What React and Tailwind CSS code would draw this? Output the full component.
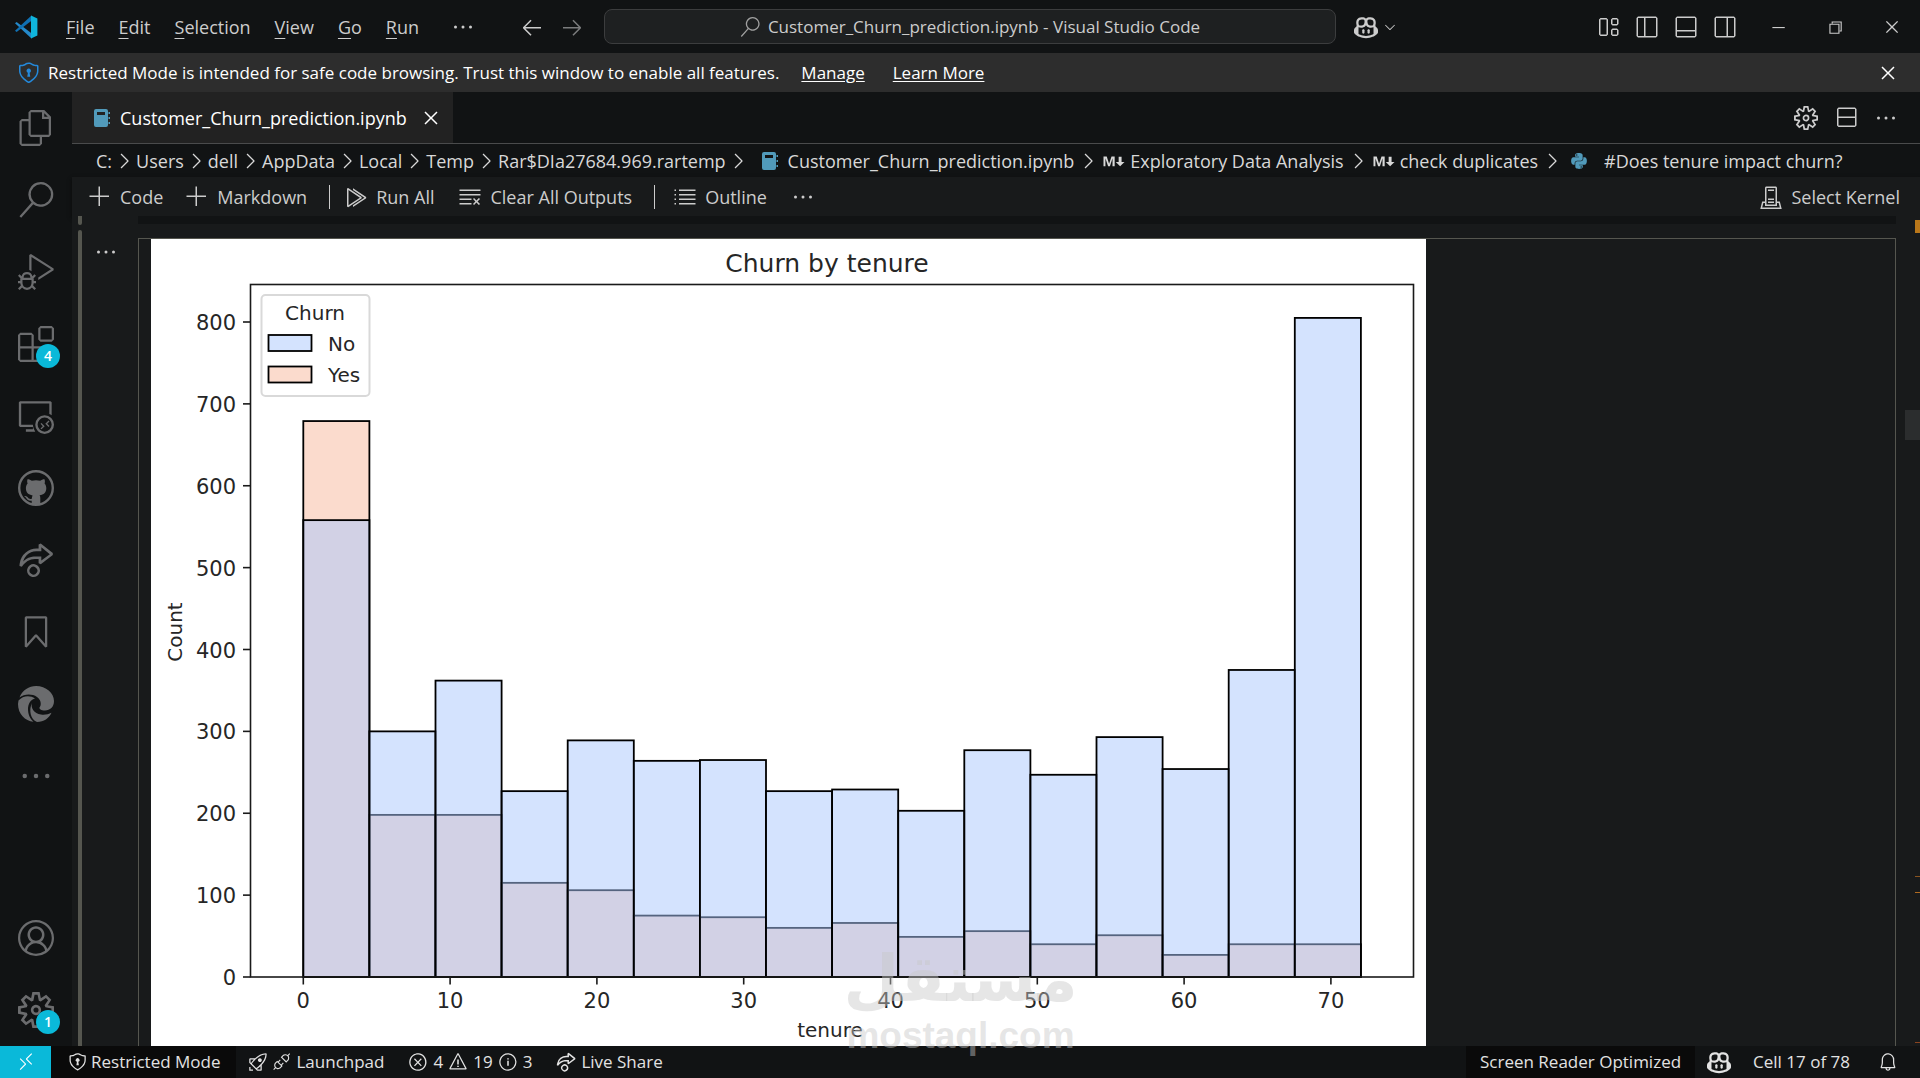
import {
  VscFiles, VscSearch, VscDebugAlt, VscExtensions, VscRemoteExplorer, VscLiveShare, VscBookmark,
  VscEllipsis, VscAccount, VscSettingsGear, VscArrowLeft, VscArrowRight, VscCopilot, VscChevronDown,
  VscChevronRight, VscLayout, VscLayoutSidebarLeftOff, VscLayoutPanelOff, VscLayoutSidebarRightOff,
  VscChromeMinimize, VscChromeRestore, VscChromeClose, VscClose, VscShield, VscSplitVertical,
  VscMarkdown, VscAdd, VscRunAll, VscClearAll, VscListUnordered, VscServerEnvironment, VscRemote,
  VscRocket, VscDebugDisconnect, VscError, VscWarning, VscInfo, VscBell,
} from 'react-icons/vsc'
import { FaPython } from 'react-icons/fa'

const MENU = ['File', 'Edit', 'Selection', 'View', 'Go', 'Run']
const FOLDERS = ['C:', 'Users', 'dell', 'AppData', 'Local', 'Temp', 'Rar$DIa27684.969.rartemp']

// histogram counts per 4.5 month bin
const NO = [558, 300, 362, 227, 289, 264, 265, 227, 229, 203, 277, 247, 293, 254, 375, 805]
const YES = [679, 198, 198, 115, 106, 75, 73, 60, 66, 49, 56, 40, 51, 27, 40, 40]

function VsCodeLogo() {
  return (
    <svg className="size-6" viewBox="0 0 24 24" aria-hidden="true">
      <path d="M1 8.2 2.6 6.9 17.5 18.2V23.6z" fill="#2489ca" />
      <path d="M1 15.8 2.6 17.1 17.5 5.8V.4z" fill="#1070b3" />
      <path d="M17 .4 23.4 3.4V20.6L17 23.6z" fill="#0fb5dc" />
    </svg>
  )
}

function NotebookIcon() {
  return (
    <svg className="h-[18px] w-4 shrink-0" viewBox="0 0 16 18" aria-hidden="true">
      <path fill="#519aba" fillRule="evenodd" d="M2 0h10a2 2 0 0 1 2 2v14a2 2 0 0 1-2 2H2a2 2 0 0 1-2-2V2a2 2 0 0 1 2-2zm1 3v3h8V3z" />
      <path fill="#519aba" d="M14.500 3H16v2h-1.500zM14.500 8H16v2h-1.500zM14.500 13H16v2h-1.500z" />
    </svg>
  )
}

function GithubIcon() {
  return (
    <svg className="size-9" viewBox="0 0 36 36" fill="currentColor" aria-hidden="true">
      <circle cx="18" cy="18" r="16.8" fill="none" stroke="currentColor" strokeWidth="2.4" />
      <path d="M9.5 9.2c1.700 0 3.200.7 4.300 1.500a17 17 0 0 1 8.400 0c1.100-.8 2.600-1.500 4.300-1.500.6 1.700.5 3.200.1 4.200 1.200 1.400 1.700 2.900 1.700 4.900 0 4.400-2.600 6.300-6.700 7 .5.8.7 1.700.7 2.800V35h-8.600v-4.300c-3.400.5-4.600-1-5.500-2.600-.5-.9-1.100-1.500-2-1.900 1.700-.5 2.900.4 3.700 1.400 1 1.400 2 1.700 3.900 1.200.1-1.400.3-2.500.8-3.400-4.200-.7-6.700-2.700-6.700-7.100 0-2 .5-3.500 1.700-4.900-.5-1-.6-2.500-.1-4.200z" />
    </svg>
  )
}

function EdgeIcon() {
  return (
    <svg className="size-9" viewBox="0 0 36 36" fill="currentColor" aria-hidden="true">
      <path d="M1.500 11.500C4.500 4 11 0 18 0c10 0 18 7 18 15 0 6-4 9.500-9 9.500-4 0-6-1.500-5.500-3 2-2 2-7.500-2.500-10.500C14 7.500 6 8 1.500 11.500z" />
      <path d="M.5 14.500C5 9.500 12 9 17 12.500c-4 .5-7 5.500-7 10.500s2 10 5.500 12.700C7 35 0 28 0 18z" />
      <path d="M14 17c-1.500 5 2 10.500 9 11.500 4 .6 7.500-.4 10.500-1.800C31 32 26 36 19 36 12.500 33.500 10.500 24 14 17z" />
    </svg>
  )
}

function TitleBar() {
  return (
    <header className="flex h-[53px] shrink-0 items-center text-[#cccccc]">
      <div className="flex flex-1 items-center">
        <div className="ml-[14px] mr-4">
          <VsCodeLogo />
        </div>
        {MENU.map((item) => (
          <button key={item} type="button" className="px-3">
            <span className="underline decoration-1 underline-offset-4">{item[0]}</span>
            {item.slice(1)}
          </button>
        ))}
        <button type="button" aria-label="More menus" className="px-5"><VscEllipsis className="size-6" /></button>
        <div className="ml-auto flex gap-4">
          <button type="button" aria-label="Go back"><VscArrowLeft className="size-6" /></button>
          <button type="button" aria-label="Go forward" className="text-[#7b7c7d]"><VscArrowRight className="size-6" /></button>
        </div>
      </div>
      <button type="button" className="ml-5 flex h-[35px] w-[732px] items-center justify-center gap-2 rounded-lg border border-[#3c3d3e] bg-[#1e2021] text-[17px]">
        <VscSearch className="size-5 text-[#a0a0a0]" />
        Customer_Churn_prediction.ipynb - Visual Studio Code
      </button>
      <div className="flex flex-1 items-center">
        <button type="button" aria-label="Copilot" className="ml-[18px] flex items-center gap-1">
          <VscCopilot className="size-6" />
          <VscChevronDown className="size-4" />
        </button>
        <div className="ml-auto flex items-center gap-[15px]">
          <button type="button" aria-label="Customize layout"><VscLayout className="size-6" /></button>
          <button type="button" aria-label="Toggle side bar"><VscLayoutSidebarLeftOff className="size-6" /></button>
          <button type="button" aria-label="Toggle panel"><VscLayoutPanelOff className="size-6" /></button>
          <button type="button" aria-label="Toggle secondary side bar"><VscLayoutSidebarRightOff className="size-6" /></button>
        </div>
        <div className="ml-3 flex items-center">
          <button type="button" aria-label="Minimize" className="flex w-[57px] justify-center"><VscChromeMinimize className="size-[18px]" /></button>
          <button type="button" aria-label="Restore" className="flex w-[57px] justify-center"><VscChromeRestore className="size-[18px]" /></button>
          <button type="button" aria-label="Close" className="flex w-[57px] justify-center"><VscChromeClose className="size-[18px]" /></button>
        </div>
      </div>
    </header>
  )
}

function Banner() {
  return (
    <div className="flex h-[39px] shrink-0 items-center bg-[#2d2d2d] pl-4 pr-5 text-[17px] text-white">
      <VscShield className="mr-2 size-6 text-[#2489db]" />
      <span>Restricted Mode is intended for safe code browsing. Trust this window to enable all features.</span>
      <a href="#manage" className="ml-[22px] underline underline-offset-2">Manage</a>
      <a href="#learn" className="ml-7 underline underline-offset-2">Learn More</a>
      <button type="button" aria-label="Dismiss" className="ml-auto"><VscClose className="size-6" /></button>
    </div>
  )
}

function Badge({ children }) {
  return (
    <span className="absolute left-9 top-9 flex size-6 items-center justify-center rounded-full bg-[#0ab9d9] text-sm font-semibold text-white">
      {children}
    </span>
  )
}

function ActivityItem({ label, badge, children }) {
  return (
    <button type="button" aria-label={label} className="relative flex size-[72px] items-center justify-center">
      {children}
      {badge && <Badge>{badge}</Badge>}
    </button>
  )
}

function ActivityBar() {
  return (
    <nav className="flex w-[72px] shrink-0 flex-col text-[#6b6c6e]">
      <ActivityItem label="Explorer"><VscFiles className="size-9" /></ActivityItem>
      <ActivityItem label="Search"><VscSearch className="size-9" /></ActivityItem>
      <ActivityItem label="Run and Debug"><VscDebugAlt className="size-9" /></ActivityItem>
      <ActivityItem label="Extensions" badge="4"><VscExtensions className="size-9" /></ActivityItem>
      <ActivityItem label="Remote Explorer"><VscRemoteExplorer className="size-9" /></ActivityItem>
      <ActivityItem label="GitHub"><GithubIcon /></ActivityItem>
      <ActivityItem label="Live Share"><VscLiveShare className="size-9" /></ActivityItem>
      <ActivityItem label="Bookmarks"><VscBookmark className="size-9" /></ActivityItem>
      <ActivityItem label="Edge Tools"><EdgeIcon /></ActivityItem>
      <ActivityItem label="Additional views"><VscEllipsis className="size-9" /></ActivityItem>
      <div className="mt-auto">
        <ActivityItem label="Accounts"><VscAccount className="size-9" /></ActivityItem>
        <ActivityItem label="Manage" badge="1"><VscSettingsGear className="size-9" /></ActivityItem>
      </div>
    </nav>
  )
}

function Tabs() {
  return (
    <div className="flex h-[52px] shrink-0 items-center border-b border-[#4a4b4c]">
      <div className="flex h-full items-center bg-[#222222] pl-[22px] pr-[10px] text-white">
        <NotebookIcon />
        <span className="ml-[10px] mr-3">Customer_Churn_prediction.ipynb</span>
        <button type="button" aria-label="Close tab"><VscClose className="size-6" /></button>
      </div>
      <div className="ml-auto mr-[22px] flex gap-4 text-[#cccccc]">
        <button type="button" aria-label="Notebook settings"><VscSettingsGear className="size-6" /></button>
        <button type="button" aria-label="Split editor"><VscSplitVertical className="size-6" /></button>
        <button type="button" aria-label="More actions"><VscEllipsis className="size-6" /></button>
      </div>
    </div>
  )
}

function Sep() {
  return <VscChevronRight className="size-6 shrink-0" />
}

function Breadcrumbs() {
  return (
    <div className="flex h-[33px] shrink-0 items-center whitespace-nowrap pl-6 text-[#d8d8d8]">
      {FOLDERS.map((name) => (
        <span key={name} className="flex items-center">{name}<Sep /></span>
      ))}
      <div className="ml-3 flex items-center gap-0.5">
        <span className="flex items-center gap-[10px]"><NotebookIcon />Customer_Churn_prediction.ipynb</span>
        <Sep />
        <span className="flex items-center gap-1"><VscMarkdown className="size-6" />Exploratory Data Analysis</span>
        <Sep />
        <span className="flex items-center gap-1"><VscMarkdown className="size-6" />check duplicates</span>
        <Sep />
        <span className="ml-1 flex items-center gap-4"><FaPython className="size-[18px] text-[#519aba]" />#Does tenure impact churn?</span>
      </div>
    </div>
  )
}

function ToolButton({ icon, children }) {
  return (
    <button type="button" className="flex items-center gap-2">
      {icon}
      {children}
    </button>
  )
}

function Toolbar() {
  return (
    <div className="flex h-[39px] shrink-0 items-center bg-[#181a1b] pl-4 pr-5 text-[#cccccc] shadow-[0_2px_4px_#0a0a0a]">
      <div className="flex items-center gap-[14px]">
        <div className="flex gap-[22px]">
          <ToolButton icon={<VscAdd className="size-6" />}>Code</ToolButton>
          <ToolButton icon={<VscAdd className="size-6" />}>Markdown</ToolButton>
        </div>
        <span className="ml-2 h-6 w-px bg-[#cccccc]" />
        <div className="flex gap-6">
          <ToolButton icon={<VscRunAll className="size-6" />}>Run All</ToolButton>
          <ToolButton icon={<VscClearAll className="size-6" />}>Clear All Outputs</ToolButton>
        </div>
        <span className="ml-2 h-6 w-px bg-[#cccccc]" />
        <div className="ml-1 flex gap-6">
          <ToolButton icon={<VscListUnordered className="size-6" />}>Outline</ToolButton>
          <button type="button" aria-label="More"><VscEllipsis className="size-6" /></button>
        </div>
      </div>
      <div className="ml-auto">
        <ToolButton icon={<VscServerEnvironment className="size-6" />}>Select Kernel</ToolButton>
      </div>
    </div>
  )
}

function Histogram() {
  const x0 = 152.3
  const y0 = 738
  const bw = 66.1
  const unit = 0.81875
  const bars = (data, fill) =>
    data.map((v, i) => (
      <rect key={i} x={x0 + i * bw} y={y0 - v * unit} width={bw} height={v * unit} fill={fill} stroke="#000" strokeWidth="1.8" />
    ))

  return (
    <svg
      className="block shrink-0 bg-white"
      width="1275"
      height="840"
      viewBox="0 0 1275 840"
      fontFamily="'DejaVu Sans', sans-serif"
      fontSize="21"
      fill="#262626"
      role="img"
      aria-label="Churn by tenure"
    >
      <text x="676" y="33" fontSize="25" textAnchor="middle">Churn by tenure</text>
      {bars(YES, '#fbdbcd')}
      {bars(NO, 'rgba(170,199,253,0.5)')}
      <rect x="99.5" y="45.5" width="1163" height="692.5" fill="none" stroke="#1a1a1a" strokeWidth="1.6" />
      {[0, 100, 200, 300, 400, 500, 600, 700, 800].map((v) => (
        <g key={v}>
          <path d={`M92 ${y0 - v * unit}h7.5`} stroke="#1a1a1a" strokeWidth="1.6" />
          <text x="85" y={y0 - v * unit + 8} textAnchor="end">{v}</text>
        </g>
      ))}
      {[0, 10, 20, 30, 40, 50, 60, 70].map((v) => (
        <g key={v}>
          <path d={`M${x0 + v * 14.68} 738v7.5`} stroke="#1a1a1a" strokeWidth="1.6" />
          <text x={x0 + v * 14.68} y="769" textAnchor="middle">{v}</text>
        </g>
      ))}

      <g fontSize="20">
        <text x="679" y="798" textAnchor="middle">tenure</text>
        <text transform="translate(31 393) rotate(-90)" textAnchor="middle">Count</text>

        {/* legend */}
        <rect x="110.5" y="56" width="108" height="101" rx="4" fill="#fff" stroke="#d9d9d9" strokeWidth="2" />
        <text x="164" y="81" textAnchor="middle">Churn</text>
        <rect x="117.5" y="96" width="43" height="16" fill="#d4e3fe" stroke="#000" strokeWidth="1.8" />
        <text x="177" y="112">No</text>
        <rect x="117.5" y="127.5" width="43" height="16" fill="#fbdbcd" stroke="#000" strokeWidth="1.8" />
        <text x="177" y="143">Yes</text>
      </g>
    </svg>
  )
}

function Watermark() {
  return (
    <div
      aria-hidden="true"
      className="pointer-events-none absolute left-[774px] top-[727px] z-10 flex w-[229px] flex-col items-center font-bold text-[#c8c8c8]/45"
    >
      <span dir="rtl" className="font-['DejaVu_Sans',sans-serif] text-[64px] leading-[72px]">مستقل</span>
      <span className="font-['Liberation_Sans',sans-serif] text-[37px] leading-[42px]">mostaql.com</span>
    </div>
  )
}

function Notebook() {
  return (
    <main className="relative flex min-h-0 flex-1 bg-[#181a1b]">
      <div className="ml-[6px] flex w-1 flex-col gap-[5px]">
        <span className="h-[9px] rounded-b bg-[#55564f]" />
        <span className="flex-1 rounded-t bg-[#55564f]" />
      </div>
      <div className="w-14 pl-3 pt-6 text-[#cccccc]">
        <button type="button" aria-label="Output actions" className="block h-6"><VscEllipsis className="size-6" /></button>
      </div>
      <div className="flex min-h-0 min-w-0 flex-1 flex-col overflow-hidden">
        {/* bottom edge of the code cell scrolled under the toolbar */}
        <div className="mb-[14px] h-2 shrink-0 bg-[#111314]" />
        <div className="flex min-h-0 flex-1 overflow-hidden border-x border-t border-[#55564f] pl-3">
          <Histogram />
        </div>
      </div>
      <div className="relative w-6 shrink-0">
        <span className="absolute right-0 top-1 h-[13px] w-[5px] bg-[#b9771a]" />
        <span className="absolute right-0 top-[194px] h-[30px] w-[15px] bg-[#2b2d2e]" />
        <span className="absolute right-0 top-[660px] h-px w-[5px] bg-[#8a5420]" />
        <span className="absolute right-0 top-[676px] h-px w-[5px] bg-[#b06a20]" />
        <span className="absolute right-0 top-[826px] h-px w-[5px] bg-[#8a4420]" />
      </div>
      <Watermark />
    </main>
  )
}

function StatusBar() {
  return (
    <footer className="flex h-8 shrink-0 items-center whitespace-nowrap bg-[#111314] text-[17px] text-[#e2e2e2]">
      <button type="button" aria-label="Open remote window" className="flex h-full w-[51px] items-center justify-center bg-[#0ab9d9] text-white">
        <VscRemote className="size-5" />
      </button>
      <button type="button" className="flex h-full items-center gap-1 bg-[#0a0a0a] px-4">
        <VscShield className="size-5" />Restricted Mode
      </button>
      <button type="button" className="ml-3 flex items-center gap-1">
        <VscRocket className="size-5" /><VscDebugDisconnect className="size-5" />Launchpad
      </button>
      <button type="button" className="ml-6 flex items-center gap-[5px]">
        <VscError className="size-5" />4<VscWarning className="size-5" />19<VscInfo className="size-5" />3
      </button>
      <button type="button" className="ml-6 flex items-center gap-[5px]">
        <VscLiveShare className="size-5" />Live Share
      </button>
      <button type="button" className="ml-auto h-full bg-[#0a0a0a] px-[14px]">Screen Reader Optimized</button>
      <button type="button" aria-label="Copilot status" className="ml-3"><VscCopilot className="size-6" /></button>
      <button type="button" className="ml-[22px]">Cell 17 of 78</button>
      <button type="button" aria-label="Notifications" className="ml-7 mr-[22px]"><VscBell className="size-5" /></button>
    </footer>
  )
}

export default function App() {
  return (
    <div className="flex h-screen flex-col overflow-hidden bg-[#111314] font-['Open_Sans','Noto_Sans',sans-serif] text-[18px] leading-6">
      <TitleBar />
      <Banner />
      <div className="flex min-h-0 flex-1">
        <ActivityBar />
        <div className="flex min-w-0 flex-1 flex-col">
          <Tabs />
          <Breadcrumbs />
          <Toolbar />
          <Notebook />
        </div>
      </div>
      <StatusBar />
    </div>
  )
}
